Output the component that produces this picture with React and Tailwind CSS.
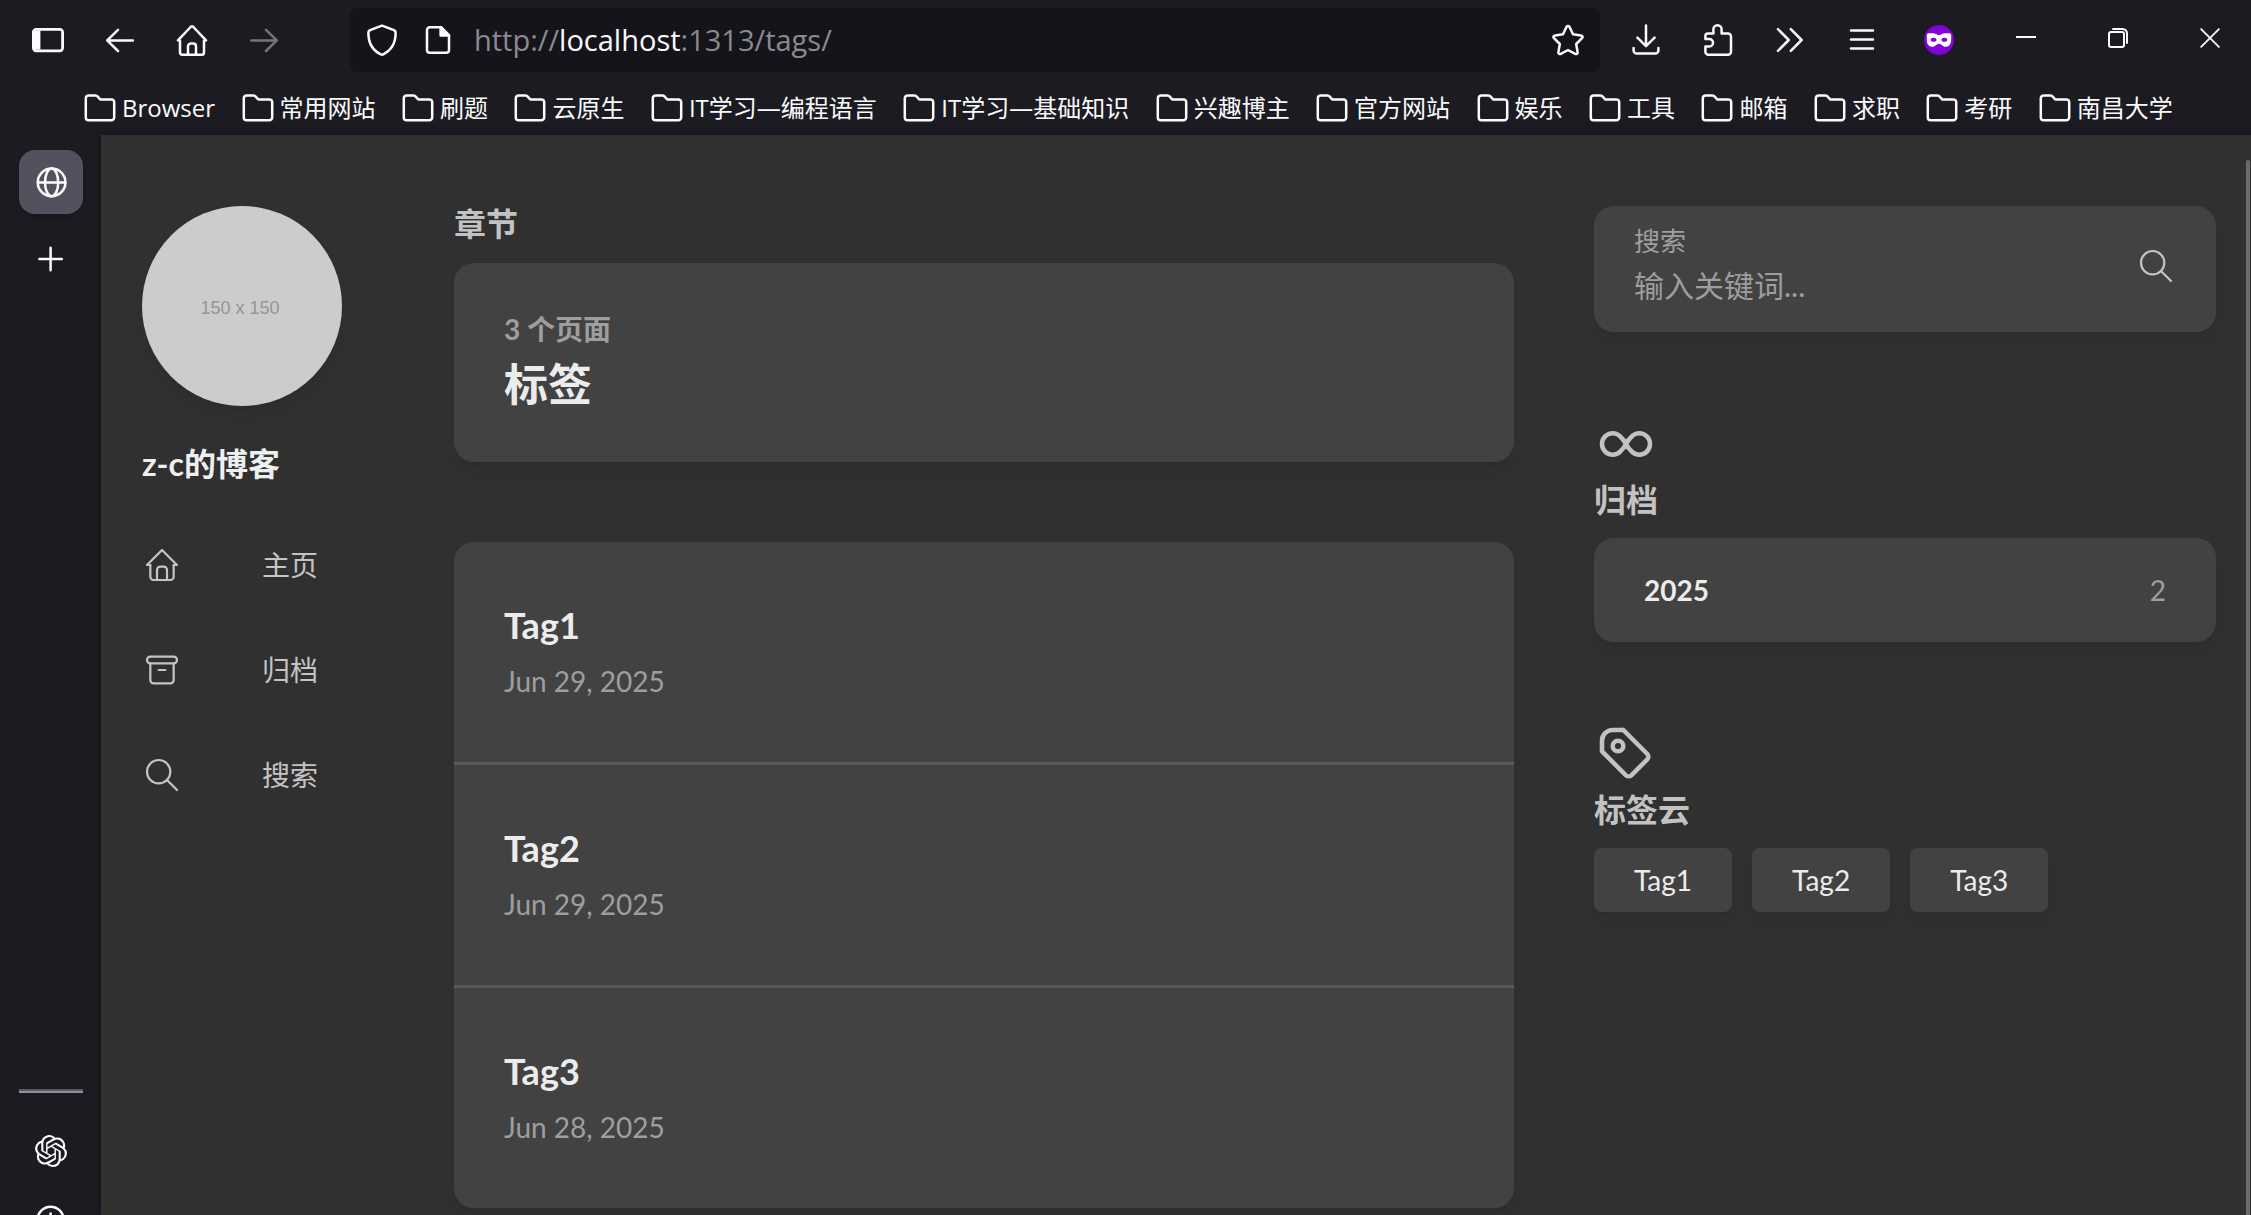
import React from "react";
import { SiOpenai } from "react-icons/si";

const bookmarks = [
  "Browser",
  "常用网站",
  "刷题",
  "云原生",
  "IT学习—编程语言",
  "IT学习—基础知识",
  "兴趣博主",
  "官方网站",
  "娱乐",
  "工具",
  "邮箱",
  "求职",
  "考研",
  "南昌大学",
];

const posts = [
  { title: "Tag1", date: "Jun 29, 2025" },
  { title: "Tag2", date: "Jun 29, 2025" },
  { title: "Tag3", date: "Jun 28, 2025" },
];

const tags = ["Tag1", "Tag2", "Tag3"];

/* 16-unit glyphs used by the browser chrome, drawn at 32px */
function ChromeIcon({ children, className = "size-8" }) {
  return (
    <svg
      viewBox="0 0 16 16"
      className={className}
      fill="none"
      stroke="currentColor"
      strokeWidth="1.25"
      strokeLinecap="round"
      strokeLinejoin="round"
      aria-hidden="true"
    >
      {children}
    </svg>
  );
}

/* 24-unit outline icons used by the blog theme */
function ThemeIcon({ children, className, weight = 1.33 }) {
  return (
    <svg
      viewBox="0 0 24 24"
      className={className}
      fill="none"
      stroke="currentColor"
      strokeWidth={weight}
      strokeLinecap="round"
      strokeLinejoin="round"
      aria-hidden="true"
    >
      {children}
    </svg>
  );
}

const HomeShape = (
  <>
    <path d="M5 12H3l9-9 9 9h-2" />
    <path d="M5 12v7a2 2 0 0 0 2 2h10a2 2 0 0 0 2-2v-7" />
    <path d="M9 21v-6a2 2 0 0 1 2-2h2a2 2 0 0 1 2 2v6" />
  </>
);

const ArchiveShape = (
  <>
    <rect x="3" y="4" width="18" height="4" rx="2" />
    <path d="M5 8v10a2 2 0 0 0 2 2h10a2 2 0 0 0 2-2V8" />
    <path d="M10 12h4" />
  </>
);

const SearchShape = (
  <>
    <circle cx="10" cy="10" r="7" />
    <path d="M21 21l-6-6" />
  </>
);

const navItems = [
  { label: "主页", shape: HomeShape },
  { label: "归档", shape: ArchiveShape },
  { label: "搜索", shape: SearchShape },
];

function ToolButton({ label, children, dim }) {
  return (
    <button
      type="button"
      aria-label={label}
      className={
        "flex h-16 w-[72px] shrink-0 items-center justify-center " +
        (dim ? "text-[#73737a]" : "text-[#fbfbfe]")
      }
    >
      {children}
    </button>
  );
}

function Toolbar() {
  return (
    <div className="flex h-20 items-center pl-3">
      <ToolButton label="Sidebar">
        <ChromeIcon>
          <rect x="0.7" y="2.7" width="14.6" height="10.7" rx="1.4" strokeWidth="1.4" />
          <path d="M1 3.2h3.2v9.6H1z" fill="currentColor" stroke="none" />
        </ChromeIcon>
      </ToolButton>
      <ToolButton label="Back">
        <ChromeIcon>
          <path d="M14.4 8.2H1.8M7 2.9L1.6 8.2 7 13.5" />
        </ChromeIcon>
      </ToolButton>
      <ToolButton label="Home">
        <ChromeIcon>
          <path d="M2 8.4v5.8a1.2 1.2 0 0 0 1.2 1.2h9.6a1.2 1.2 0 0 0 1.2-1.2V8.4" />
          <path d="M1 8.2L7.3 1.5a1 1 0 0 1 1.4 0L15 8.2" />
          <path d="M6 15.2v-4a1.4 1.4 0 0 1 1.4-1.4h1.2A1.4 1.4 0 0 1 10 11.2v4" />
        </ChromeIcon>
      </ToolButton>
      <ToolButton label="Forward" dim>
        <ChromeIcon>
          <path d="M1.6 8.2h12.6M9 2.9l5.4 5.3L9 13.5" />
        </ChromeIcon>
      </ToolButton>

      <div className="ml-[50px] flex h-16 min-w-0 flex-1 items-center rounded-lg bg-[#15141a] px-4 text-[#fbfbfe]">
        <ChromeIcon className="size-8 shrink-0">
          <path d="M8 .8l6 2.3a1.2 1.2 0 0 1 .8 1.1C14.9 9.4 12.6 13.2 8.6 15.200a1.400 1.400 0 0 1-1.200 0C3.400 13.200 1.100 9.400 1.200 4.200A1.200 1.200 0 0 1 2 3.100z" />
        </ChromeIcon>
        <ChromeIcon className="ml-6 size-8 shrink-0">
          <path d="M9.500 1.600H3.900a1.400 1.400 0 0 0-1.400 1.400v10a1.400 1.400 0 0 0 1.400 1.400h8.200a1.400 1.400 0 0 0 1.400-1.400V5.600z" />
          <path d="M9.300 1.600v4.200h4.200z" fill="currentColor" />
        </ChromeIcon>
        <div
          role="textbox"
          aria-label="Address"
          contentEditable
          suppressContentEditableWarning
          className="ml-5 min-w-0 flex-1 text-[29px] leading-10 text-[#8a8a90] outline-none"
        >
          http://<span className="text-[#fbfbfe]">localhost</span>:1313/tags/
        </div>
        <button type="button" aria-label="Bookmark" className="shrink-0">
          <ChromeIcon>
            <path d="M7.300 1.400a.8.8 0 0 1 1.400 0l1.800 3.700 4 .6a.8.8 0 0 1 .5 1.400l-2.900 2.900.7 4a.8.8 0 0 1-1.200.9L8 13l-3.600 1.900a.8.8 0 0 1-1.200-.9l.7-4L1 7.100a.8.8 0 0 1 .5-1.400l4-.6z" />
          </ChromeIcon>
        </button>
      </div>

      <div className="ml-2.5 flex items-center text-[#fbfbfe]">
        <ToolButton label="Downloads">
          <ChromeIcon>
            <path d="M8 .8v10M3.700 6.800L8 11.100l4.300-4.300" />
            <path d="M1.800 12v1.200a1.600 1.600 0 0 0 1.600 1.600h9.200a1.600 1.600 0 0 0 1.600-1.600V12" />
          </ChromeIcon>
        </ToolButton>
        <ToolButton label="Extensions">
          <ChromeIcon>
            <path d="M5.700 4.700V2.700a2.050 2.050 0 0 1 4.100 0v2h3.200a1.500 1.500 0 0 1 1.500 1.500v7.700a1.500 1.500 0 0 1-1.500 1.500H3.200a1.500 1.500 0 0 1-1.500-1.500v-2.600h1.900a1.900 1.900 0 0 0 0-3.800H1.700V5.900a1.200 1.200 0 0 1 1.200-1.200z" />
          </ChromeIcon>
        </ToolButton>
        <ToolButton label="More tools">
          <ChromeIcon>
            <path d="M2 2.600l5.400 5.400L2 13.400M8.400 2.600l5.400 5.400-5.400 5.400" />
          </ChromeIcon>
        </ToolButton>
        <ToolButton label="Menu">
          <ChromeIcon>
            <path d="M2.500 3.200h11M2.500 7.700h11M2.500 12.200h11" />
          </ChromeIcon>
        </ToolButton>
        <span
          role="img"
          aria-label="Private browsing"
          className="flex w-[82px] shrink-0 justify-center"
        >
          <svg viewBox="0 0 30 30" className="size-[30px]" aria-hidden="true">
            <circle cx="15" cy="15" r="15" fill="#8000d7" />
            <path
              fill="#fff"
              d="M9 8.300c2.400 0 3.600 1.700 6 1.700s3.600-1.700 6-1.700h4.500c1 0 1.700.7 1.700 1.700v4.500c0 4.400-2 7.300-5.700 7.300-3.200 0-3.700-3.100-6.500-3.100s-3.300 3.100-6.500 3.100c-3.700 0-5.700-2.900-5.700-7.300V10c0-1 .7-1.700 1.700-1.700z"
            />
            <ellipse cx="9.600" cy="14.800" rx="2.900" ry="2" fill="#8000d7" />
            <ellipse cx="20.400" cy="14.800" rx="2.900" ry="2" fill="#8000d7" />
          </svg>
        </span>
        <button type="button" aria-label="Minimize" className="flex h-16 w-[92px] shrink-0 items-center justify-center">
          <svg viewBox="0 0 20 20" className="mb-1.5 size-5" stroke="currentColor" strokeWidth="2">
            <path d="M0 10h20" />
          </svg>
        </button>
        <button type="button" aria-label="Restore" className="flex h-16 w-[92px] shrink-0 items-center justify-center">
          <svg viewBox="0 0 20 20" className="mb-1 size-5" fill="none" stroke="currentColor" strokeWidth="2">
            <rect x="1" y="4" width="15" height="15" rx="2" />
            <path d="M5 1h9.500A4.500 4.500 0 0 1 19 5.500V15" strokeLinecap="round" />
          </svg>
        </button>
        <button type="button" aria-label="Close" className="flex h-16 w-[87px] shrink-0 items-center justify-center pl-1">
          <svg viewBox="0 0 20 20" className="mb-1 size-5" stroke="currentColor" strokeWidth="1.800">
            <path d="M.6.6l18.800 18.800M19.400.6L.6 19.400" />
          </svg>
        </button>
      </div>
    </div>
  );
}

function Bookmarks() {
  return (
    <nav aria-label="Bookmarks" className="flex h-[55px] items-center justify-between pr-[78px] pl-[84px]">
      {bookmarks.map((name) => (
        <button
          key={name}
          type="button"
          className="flex items-center gap-[6px] whitespace-nowrap text-2xl text-[#fbfbfe]"
        >
          <ChromeIcon className="size-8 shrink-0">
            <path d="M2.300 1.700h3.300a1.400 1.400 0 0 1 1 .4l1.500 1.600h5.600a1.400 1.400 0 0 1 1.400 1.400v7.600a1.400 1.400 0 0 1-1.400 1.400H2.300a1.400 1.400 0 0 1-1.400-1.400V3.100a1.400 1.400 0 0 1 1.400-1.400z" />
          </ChromeIcon>
          <span>{name}</span>
        </button>
      ))}
    </nav>
  );
}

function TabStrip() {
  return (
    <aside className="flex w-[101px] shrink-0 flex-col items-center pt-[15px] text-[#fbfbfe]">
      <button
        type="button"
        aria-label="Current tab"
        className="flex size-16 items-center justify-center rounded-2xl bg-[#52525e] shadow-md"
      >
        <ChromeIcon>
          <circle cx="8.300" cy="8.200" r="6.900" />
          <ellipse cx="8.300" cy="8.200" rx="3.300" ry="6.900" />
          <path d="M1.500 8.200h13.600" />
        </ChromeIcon>
      </button>
      <button type="button" aria-label="New tab" className="mt-[29px] flex size-8 items-center justify-center">
        <ChromeIcon>
          <path d="M7.800 2.400v11.200M2.200 8h11.200" />
        </ChromeIcon>
      </button>
      <div className="mt-auto w-16 border-t-2 border-b-2 border-t-[#5b5b66] border-b-[#8f8f9d]" />
      <button type="button" aria-label="ChatGPT" className="mt-[42px]">
        <SiOpenai className="size-8" />
      </button>
      <button type="button" aria-label="Assistant" className="mt-[37px] h-[11px] overflow-hidden">
        <ChromeIcon>
          <circle cx="7.800" cy="8" r="6.600" />
          <path d="M7.800 4.800v6.400" />
        </ChromeIcon>
      </button>
    </aside>
  );
}

function ProfileColumn() {
  return (
    <aside className="w-[312px] shrink-0">
      <div
        role="img"
        aria-label="Avatar"
        className="flex size-[200px] items-center justify-center rounded-full bg-[#cccccc] pt-1 pr-1 font-['Liberation_Sans',sans-serif] text-lg text-[#969696] shadow-lg shadow-black/5"
      >
        150 x 150
      </div>
      <h1 className="mt-9 text-[32px] leading-[44px] font-bold text-[#ecf0f1]">
        <a href="#home">z-c的博客</a>
      </h1>
      <ul className="mt-[59px] flex flex-col gap-[65px]">
        {navItems.map((item) => (
          <li key={item.label}>
            <a href={"#" + item.label} className="flex h-10 items-center gap-20 text-[28px] text-[#c4c4c4]">
              <ThemeIcon className="size-10">{item.shape}</ThemeIcon>
              <span>{item.label}</span>
            </a>
          </li>
        ))}
      </ul>
    </aside>
  );
}

function MainColumn() {
  return (
    <main className="min-w-0 flex-1">
      <h3 className="text-[32px] leading-9 font-bold text-[#c2c2c2]">章节</h3>
      <section className="mt-[21px] rounded-[20px] bg-[#424242] px-[50px] py-12 shadow-lg shadow-black/5">
        <h3 className="text-[28px] leading-9 font-bold text-[#9e9e9e]">3 个页面</h3>
        <h2 className="mt-2 text-[44px] leading-[59px] font-bold text-[#ececec]">标签</h2>
      </section>
      <section className="mt-20 rounded-[20px] bg-[#424242] shadow-lg shadow-black/5">
        {posts.map((post) => (
          <article
            key={post.title}
            className="border-b-3 border-[#5a5a5a] px-[50px] py-[60px] last:border-b-0"
          >
            <h2 className="text-4xl leading-[46px] font-bold text-[#ececec]">
              <a href={"#" + post.title}>{post.title}</a>
            </h2>
            <time className="mt-3 block text-[28px] leading-[42px] text-[#9e9e9e]">{post.date}</time>
          </article>
        ))}
      </section>
    </main>
  );
}

function WidgetColumn() {
  return (
    <aside className="ml-20 w-[622px] shrink-0">
      <form
        className="flex h-[126px] items-center rounded-[20px] bg-[#424242] px-10 shadow-lg shadow-black/5"
        onSubmit={(e) => e.preventDefault()}
      >
        <div className="flex min-w-0 flex-1 flex-col">
          <label htmlFor="keyword" className="text-[26px] leading-9 text-[#9e9e9e]">
            搜索
          </label>
          <input
            id="keyword"
            type="search"
            placeholder="输入关键词..."
            className="mt-1 mb-2 h-11 w-full bg-transparent text-[30px] text-[#ececec] outline-none placeholder:text-[#9e9e9e]"
          />
        </div>
        <button type="submit" aria-label="搜索" className="mb-1.5 text-[#c4c4c4]">
          <ThemeIcon className="size-10">{SearchShape}</ThemeIcon>
        </button>
      </form>

      <section className="mt-20 text-[#c2c2c2]">
        <ThemeIcon className="size-16" weight={1.7}>
          <path d="M9.828 9.172a4 4 0 1 0 0 5.656 10 10 0 0 0 2.172-2.828 10 10 0 0 1 2.172-2.828 4 4 0 1 1 0 5.656 10 10 0 0 1-2.172-2.828 10 10 0 0 0-2.172-2.828" />
        </ThemeIcon>
        <h2 className="mt-1.5 text-[32px] leading-9 font-bold">归档</h2>
        <a
          href="#2025"
          className="mt-5 flex h-[104px] items-center justify-between rounded-[20px] bg-[#424242] px-[50px] text-[28px] shadow-lg shadow-black/5"
        >
          <span className="font-bold text-[#ececec]">2025</span>
          <span className="text-[#9e9e9e]">2</span>
        </a>
      </section>

      <section className="mt-20 text-[#c2c2c2]">
        <ThemeIcon className="size-16" weight={1.7}>
          <path d="M11 3l9 9a1.500 1.500 0 0 1 0 2l-6 6a1.500 1.500 0 0 1-2 0l-9-9v-4a4 4 0 0 1 4-4h4" />
          <circle cx="9" cy="9" r="2" />
        </ThemeIcon>
        <h2 className="mt-1.5 text-[32px] leading-9 font-bold">标签云</h2>
        <div className="mt-5 flex flex-wrap gap-5">
          {tags.map((tag) => (
            <a
              key={tag}
              href={"#" + tag}
              className="flex h-16 items-center rounded-lg bg-[#424242] px-10 text-[28px] text-[#ececec] shadow-lg shadow-black/5"
            >
              {tag}
            </a>
          ))}
        </div>
      </section>
    </aside>
  );
}

export default function App() {
  return (
    <div className="flex h-screen flex-col overflow-hidden bg-[#1c1b22] font-['Open_Sans','Noto_Sans_CJK_SC',sans-serif]">
      <header>
        <Toolbar />
        <Bookmarks />
      </header>
      <div className="flex min-h-0 flex-1">
        <TabStrip />
        <div className="relative flex min-w-0 flex-1 items-start overflow-hidden bg-[#303030] pt-[71px] pr-[35px] pl-[41px] font-['Lato','Noto_Sans_CJK_SC',sans-serif] shadow-[0_0_8px_rgba(0,0,0,0.4)]">
          <ProfileColumn />
          <MainColumn />
          <WidgetColumn />
          <div className="absolute top-[25px] right-px bottom-0 w-1 rounded-t-sm bg-[#6b6b6b]" />
        </div>
      </div>
    </div>
  );
}
